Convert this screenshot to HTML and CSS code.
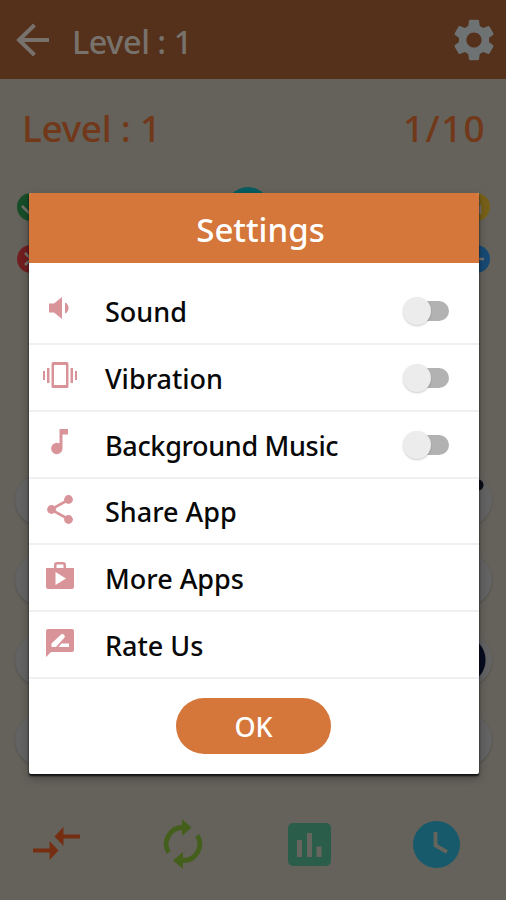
FILE: index.html
```html
<!DOCTYPE html>
<html lang="en">
<head>
<meta charset="utf-8">
<title>Level : 1</title>
<link rel="stylesheet" href="styles.css">
</head>
<body>
<div class="game">
  <header class="bar">
    <svg class="back" viewBox="0 0 34 34" fill="none" stroke="currentColor" stroke-width="4"><path d="M33 17H3M18.500 2 3 17l15.500 15"/></svg>
    <span class="bar-title">Level : 1</span>
    <svg class="gear" viewBox="2 2 20 20" fill="currentColor"><path d="M19.14 12.94c.04-.3.06-.61.06-.94 0-.32-.02-.64-.07-.94l2.03-1.58c.18-.14.23-.41.12-.61l-1.92-3.32c-.12-.22-.37-.29-.59-.22l-2.39.96c-.5-.38-1.03-.7-1.62-.94l-.36-2.54c-.04-.24-.24-.41-.48-.41h-3.84c-.24 0-.43.17-.47.41l-.36 2.54c-.59.24-1.13.57-1.62.94l-2.39-.96c-.22-.08-.47 0-.59.22L2.74 8.87c-.12.21-.08.47.12.61l2.03 1.58c-.05.3-.09.63-.09.94s.02.64.07.94l-2.03 1.58c-.18.14-.23.41-.12.61l1.92 3.32c.12.22.37.29.59.22l2.39-.96c.5.38 1.03.7 1.62.94l.36 2.54c.05.24.24.41.48.41h3.84c.24 0 .44-.17.47-.41l.36-2.54c.59-.24 1.13-.56 1.62-.94l2.39.96c.22.08.47 0 .59-.22l1.92-3.32c.12-.22.07-.47-.12-.61l-2.01-1.58zM12 15.6c-1.98 0-3.6-1.62-3.6-3.6s1.62-3.6 3.6-3.6 3.6 1.62 3.6 3.6-1.62 3.6-3.6 3.6z"/></svg>
  </header>
  <div class="status"><span class="level">Level : 1</span><span class="count">1/10</span></div>
  <div class="scores">
    <svg class="dot green" viewBox="0 0 28 28"><path d="M5 13l7 7 11-12"/></svg>
    <svg class="arc" viewBox="0 0 44 44"><circle cx="22" cy="22" r="22" fill="currentColor"/></svg>
    <svg class="dot yellow" viewBox="0 0 28 28"><path d="M18 8h-7v5h7v7h-8"/></svg>
    <svg class="dot red" viewBox="0 0 28 28"><path d="M8 8l12 12M20 8L8 20"/></svg>
    <svg class="dot blue" viewBox="0 0 28 28"><path d="M7 14h15"/></svg>
  </div>
  <div class="choices">
    <i class="choice"></i><i class="choice ink-top"></i>
    <i class="choice"></i><i class="choice"></i>
    <i class="choice"></i><i class="choice ink-mid"></i>
    <i class="choice"></i><i class="choice"></i>
  </div>
  <nav class="tools">
    <svg width="47" height="34" viewBox="0 0 47 34" fill="#762e12"><path d="M0 21.500h16.500V14l9 9.500-9 9.500v-7.500H0zM47 7.500V11.500H30.500V19L21.500 9.500l9-9.500v7.500z"/></svg>
    <svg width="40" height="52" viewBox="0 0 40 52"><g fill="none" stroke="#445f1c" stroke-width="4.800"><path d="M5.600 34.500A16.500 16.500 0 0 1 20 9.500M34.400 17.500A16.500 16.500 0 0 1 20 42.500"/></g><path fill="#445f1c" d="M19 1l9.500 8.500L19 18zM20 34v17l-10-8.500z"/></svg>
    <svg width="43" height="43" viewBox="0 0 43 43"><rect width="43" height="43" rx="5" fill="#2a5e4a"/><path fill="#65655d" d="M9 17h5v17H9zM19 10h5v24h-5zM28.500 23.500h5V34h-5z"/></svg>
    <svg width="47" height="47" viewBox="0 0 47 47"><circle cx="23.500" cy="23.500" r="23.500" fill="#175a6b"/><path d="M22.500 11v13.500L34 31" fill="none" stroke="#65655d" stroke-width="3.800"/></svg>
  </nav>
</div>

<div class="overlay">
  <section class="dialog">
    <h1 class="title">Settings</h1>
    <ul class="list">
      <li class="row"><svg class="icon" viewBox="0 0 36 36"><path d="M7 13.500h5l8-6.500v22l-8-6.500H7zM23 12.500c4.800 1.500 4.800 9.500 0 11z"/></svg><span class="label">Sound</span><span class="switch"></span></li>
      <li class="row"><svg class="icon" viewBox="0 0 36 36"><path fill-rule="evenodd" d="M11 5h14q1.500 0 1.500 1.500v23q0 1.500-1.500 1.500H11q-1.500 0-1.500-1.500v-23Q9.500 5 11 5zM12 8v20h12V8zM1 14h2v9H1zM5 11h2.500v15H5zM28.500 11H31v15h-2.500zM33 14h2v9h-2z"/></svg><span class="label">Vibration</span><span class="switch"></span></li>
      <li class="row"><svg class="icon" viewBox="0 0 36 36"><path d="M17.500 5H26v5.500h-5.500v14a5.700 5.700 0 1 1-3-5z"/></svg><span class="label tight">Background Music</span><span class="switch"></span></li>
      <li class="row"><svg class="icon" viewBox="0 0 36 36"><path d="M27 8.500 9 18.500l18 10" fill="none" stroke="#d9949a" stroke-width="2.600"/><circle cx="26.500" cy="8.500" r="4.400"/><circle cx="9.500" cy="18.500" r="4.400"/><circle cx="26.500" cy="28.500" r="4.400"/></svg><span class="label">Share App</span></li>
      <li class="row"><svg class="icon" viewBox="0 0 36 36"><path fill-rule="evenodd" d="M12 10V7q0-3 3-3h6q3 0 3 3v3h8v19q0 2-2 2H6q-2 0-2-2V10zM14.500 10h7V7q0-.5-.5-.5h-6q-.5 0-.5.5zM13.500 14v13L24 20.500z"/></svg><span class="label">More Apps</span></li>
      <li class="row"><svg class="icon" viewBox="0 0 36 36"><path fill-rule="evenodd" d="M6 4h24q2 0 2 2v19q0 2-2 2H9l-5 5V6q0-2 2-2zM9.500 22h4.500L22.500 12.500q1-1-.3-2.600t-2.900-.6L9.500 18.500zM16.500 22H27v-3.500h-7.500z"/></svg><span class="label">Rate Us</span></li>
    </ul>
    <button class="ok">OK</button>
  </section>
</div>
</body>
</html>
```

FILE: styles.css
```css
* { box-sizing: border-box; }
body {
  margin: 0;
  width: 506px;
  height: 900px;
  overflow: hidden;
  font-family: "Noto Sans", sans-serif;
  font-weight: 500;
}
svg { display: block; flex: none; }
.game { height: 900px; background: #65625b; display: flex; flex-direction: column; }

.bar {
  height: 79px;
  flex: none;
  display: flex;
  align-items: center;
  padding: 1px 11px 0 16px;
  background: #55301a;
  color: #78726d;
}
.back { width: 34px; height: 34px; }
.bar-title { margin-left: 22px; font-size: 32.500px; line-height: 40px; padding-top: 3px; letter-spacing: -.5px; }
.gear { width: 42px; height: 44px; margin-left: auto; color: #6e7273; }

.status {
  height: 98px;
  flex: none;
  display: flex;
  align-items: center;
  justify-content: space-between;
  padding: 0 20px 2px 22px;
  color: #71381a;
  font-size: 37px;
}
.level { letter-spacing: -.3px; }
.count { letter-spacing: 1.300px; }

.scores {
  flex: none;
  display: grid;
  grid-template-columns: 28px 28px 28px;
  grid-template-rows: 28px 28px;
  justify-content: space-between;
  gap: 24px 0;
  padding: 16px 16px 0 17px;
}
.dot { width: 28px; height: 28px; border-radius: 50%; fill: none; stroke: #77716c; stroke-width: 2.500; }
.arc { width: 44px; height: 44px; margin-top: -6px; margin-left: -14px; color: #075d61; }
.green { background: #174e28; }
.yellow { background: #776018; }
.red { background: #711e20; grid-column: 1; }
.blue { background: #164a74; grid-column: 3; }

.choices {
  flex: none;
  display: grid;
  grid-template-columns: 56px 56px;
  justify-content: space-between;
  row-gap: 26px;
  padding: 200px 14px 0 15px;
}
.choice { height: 54px; border-radius: 50%; background: #636363; box-shadow: 0 1px 2px #504e49; }
.ink-top { background: radial-gradient(circle at 42px 12px, #090b16 5px, #636363 6px); }
.ink-mid { background: radial-gradient(circle at 25px 27px, #070b20 24px, #636363 25px); }

.tools {
  margin-top: auto;
  flex: none;
  height: 112px;
  display: grid;
  grid-template-columns: repeat(4, 126.500px);
  align-items: center;
  justify-items: center;
}
.tools svg { margin-right: 13px; }

.overlay { position: absolute; inset: 0; padding: 193px 27px 0 29px; }
.dialog {
  height: 581px;
  background: #fff;
  border-radius: 2px;
  overflow: hidden;
  box-shadow: 0 2px 2px #111, 0 4px 10px rgba(0, 0, 0, .3);
  display: flex;
  flex-direction: column;
}
.title {
  margin: 0;
  height: 70px;
  padding: 2px 0 0 13px;
  background: #d5763a;
  color: #fff;
  font-size: 33px;
  font-weight: 500;
  line-height: 70px;
  text-align: center;
}
.list { margin: 0; padding: 15px 0 0; list-style: none; }
.row { height: 66.850px; display: flex; align-items: center; padding: 0 30px 0 13px; border-bottom: 2px solid #f0f0f1; }
.icon { width: 36px; height: 36px; margin-top: -4px; fill: #d9949a; }
.label { margin-left: 27px; padding-top: 3px; font-size: 27px; line-height: 40px; color: #080808; white-space: nowrap; }
.tight { letter-spacing: -.330px; }
.switch { position: relative; width: 38px; height: 20px; margin-top: 2px; margin-left: auto; border-radius: 10px; background: #b2b2b2; }
.switch::before {
  content: "";
  position: absolute;
  left: -8px;
  top: -4px;
  width: 28px;
  height: 28px;
  border-radius: 50%;
  background: #ececec;
  box-shadow: 0 1px 2px rgba(0, 0, 0, .2);
}
.ok {
  align-self: center;
  width: 155px;
  height: 56px;
  margin: 19px 1px 0 0;
  padding: 1px 0 0;
  border: 0;
  border-radius: 28px;
  background: #d5763a;
  color: #fff;
  font: 500 27px "Noto Sans", sans-serif;
}
```
